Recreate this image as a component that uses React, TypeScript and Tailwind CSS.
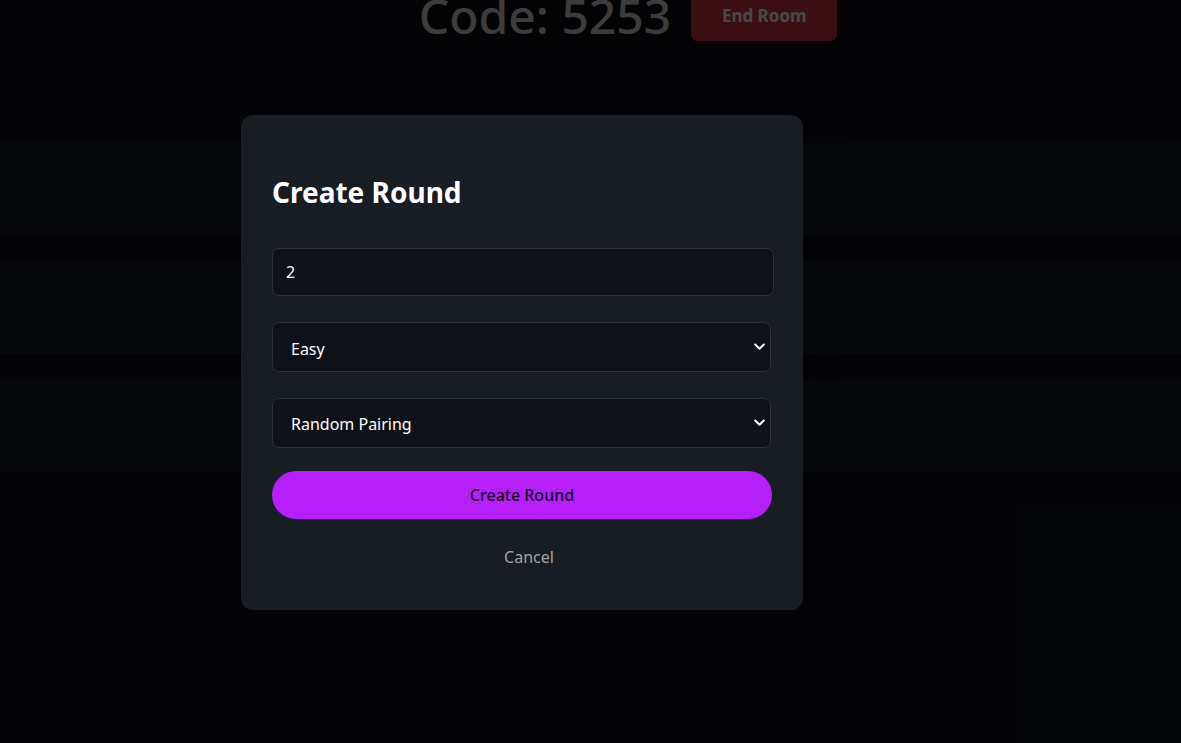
import { useState } from "react";

const rows = [0, 1, 2];

export default function App() {
  const [count, setCount] = useState("2");
  const [difficulty, setDifficulty] = useState("easy");
  const [mode, setMode] = useState("random");

  return (
    <div
      className="relative min-h-[743px] w-full overflow-hidden bg-[#0a0d11] text-white"
      style={{ fontFamily: '"Noto Sans", "Open Sans", sans-serif' }}
    >
      {/* Page behind the modal */}
      <div className="flex flex-col">
        <div className="flex h-[36px] items-start justify-center gap-[20px] pl-[75px]">
          <h1 className="-mt-[17px] text-[48px] font-medium leading-[66px] text-[#c8c8c8]">Code: 5253</h1>
          <button className="-mt-[14px] h-[55px] w-[146px] rounded-[7px] bg-[#c4303d] pt-[4px] text-[17px] font-bold text-[#f0f0f0]">
            End Room
          </button>
        </div>

        <div className="mt-[107px] flex flex-col gap-[25px]">
          {rows.map((r) => (
            <div key={r} className="flex h-[93px] w-full">
              <div className="flex-1 bg-[#151920]" />
              <div className="w-px bg-[#0f1217]" />
              <div className="w-[25px] bg-[#13171d]" />
              <div className="w-px bg-[#0f1217]" />
              <div className="w-[340px] bg-[#151920]" />
            </div>
          ))}
        </div>
      </div>

      {/* Overlay */}
      <div className="absolute inset-0 bg-black/70" />

      {/* Modal */}
      <div className="absolute left-[241px] top-[115px] flex h-[495px] w-[562px] flex-col rounded-[12px] bg-[#181c23] px-[31px] pt-[58px]">
        <h2 className="text-[28px] font-bold leading-[38px] text-white">Create Round</h2>

        <input
          value={count}
          onChange={(e) => setCount(e.target.value)}
          className="mt-[37px] h-[48px] w-[502px] rounded-[7px] border border-[#2c3038] bg-[#0e1118] px-[13px] text-[16px] text-white outline-none"
        />

        <div className="relative mt-[26px] w-[499px]">
          <select
            value={difficulty}
            onChange={(e) => setDifficulty(e.target.value)}
            className="h-[50px] w-full appearance-none rounded-[7px] border border-[#2c3038] bg-[#0e1118] px-[18px] pt-[3px] text-[16px] text-white outline-none"
          >
            <option value="easy">Easy</option>
            <option value="medium">Medium</option>
            <option value="hard">Hard</option>
          </select>
          <Chevron />
        </div>

        <div className="relative mt-[26px] w-[499px]">
          <select
            value={mode}
            onChange={(e) => setMode(e.target.value)}
            className="h-[50px] w-full appearance-none rounded-[7px] border border-[#2c3038] bg-[#0e1118] px-[18px] pt-[2px] text-[16px] text-white outline-none"
          >
            <option value="random">Random Pairing</option>
            <option value="manual">Manual Pairing</option>
          </select>
          <Chevron />
        </div>

        <button className="mt-[23px] h-[48px] w-[500px] rounded-full bg-[#b51ffa] text-[16px] font-medium text-[#140018]">
          Create Round
        </button>

        <button className="mt-[26px] self-center pl-[14px] text-[16px] text-[#a3a3a3]">Cancel</button>
      </div>
    </div>
  );
}

function Chevron() {
  return (
    <svg
      className="pointer-events-none absolute right-[6px] top-[21px]"
      width="11"
      height="8"
      viewBox="0 0 11 8"
      fill="none"
    >
      <path d="M1.2 1.5 5.5 5.8 9.8 1.5" stroke="white" strokeWidth="2" strokeLinecap="round" strokeLinejoin="round" />
    </svg>
  );
}
